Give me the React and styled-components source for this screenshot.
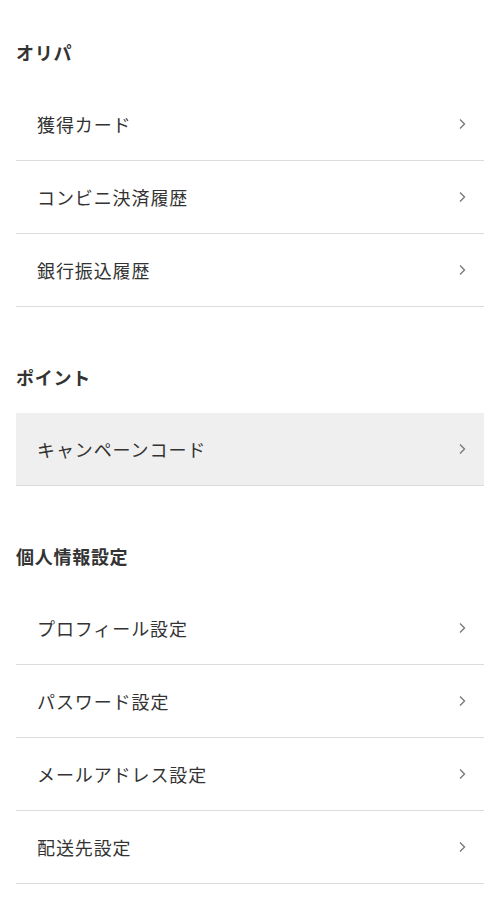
import React from 'react';
import styled, { createGlobalStyle } from 'styled-components';

const GlobalStyle = createGlobalStyle`
	body {
		margin: 0;
		background: #fff;
		font-family: "Noto Sans CJK JP", "Noto Sans", sans-serif;
		color: #333;
	}
`;

const Page = styled.div`
	padding: 16px 16px 0;
	display: flex;
	flex-direction: column;
	gap: 34px;
`;

const Section = styled.section`
	display: flex;
	flex-direction: column;
`;

const Heading = styled.h2`
	margin: 0;
	height: 72px;
	display: flex;
	align-items: center;
	font-size: 18px;
	font-weight: 700;
	letter-spacing: 0.04em;
	color: #333;
`;

const List = styled.ul`
	list-style: none;
	margin: 0;
	padding: 0;
`;

const Item = styled.li`
	height: 72px;
	display: flex;
	align-items: center;
	justify-content: space-between;
	padding: 0 17px 0 21px;
	border-bottom: 1px solid #dcdcdc;
	background: ${({ active }) => active ? '#efefef' : 'transparent'};
	font-size: 18px;
	letter-spacing: 0.05em;
	color: #333;
	cursor: pointer;
`;

const Chevron = () => (
	<svg width="9" height="14" viewBox="0 0 9 14" fill="none">
		<path d="M2 2.5l4.5 4.5-4.5 4.5" stroke="#7a7a7a" strokeWidth="1.4" />
	</svg>
);

const sections = [
	{ title: 'オリパ', items: ['獲得カード', 'コンビニ決済履歴', '銀行振込履歴'] },
	{ title: 'ポイント', items: ['キャンペーンコード'], active: 0 },
	{ title: '個人情報設定', items: ['プロフィール設定', 'パスワード設定', 'メールアドレス設定', '配送先設定'] },
];

export default function App() {
	return (
		<React.Fragment>
			<GlobalStyle />
			<Page>
				{sections.map(s => (
					<Section key={s.title}>
						<Heading>{s.title}</Heading>
						<List>
							{s.items.map((label, i) => (
								<Item key={label} active={s.active === i}>
									<span>{label}</span>
									<Chevron />
								</Item>
							))}
						</List>
					</Section>
				))}
			</Page>
		</React.Fragment>
	);
}
